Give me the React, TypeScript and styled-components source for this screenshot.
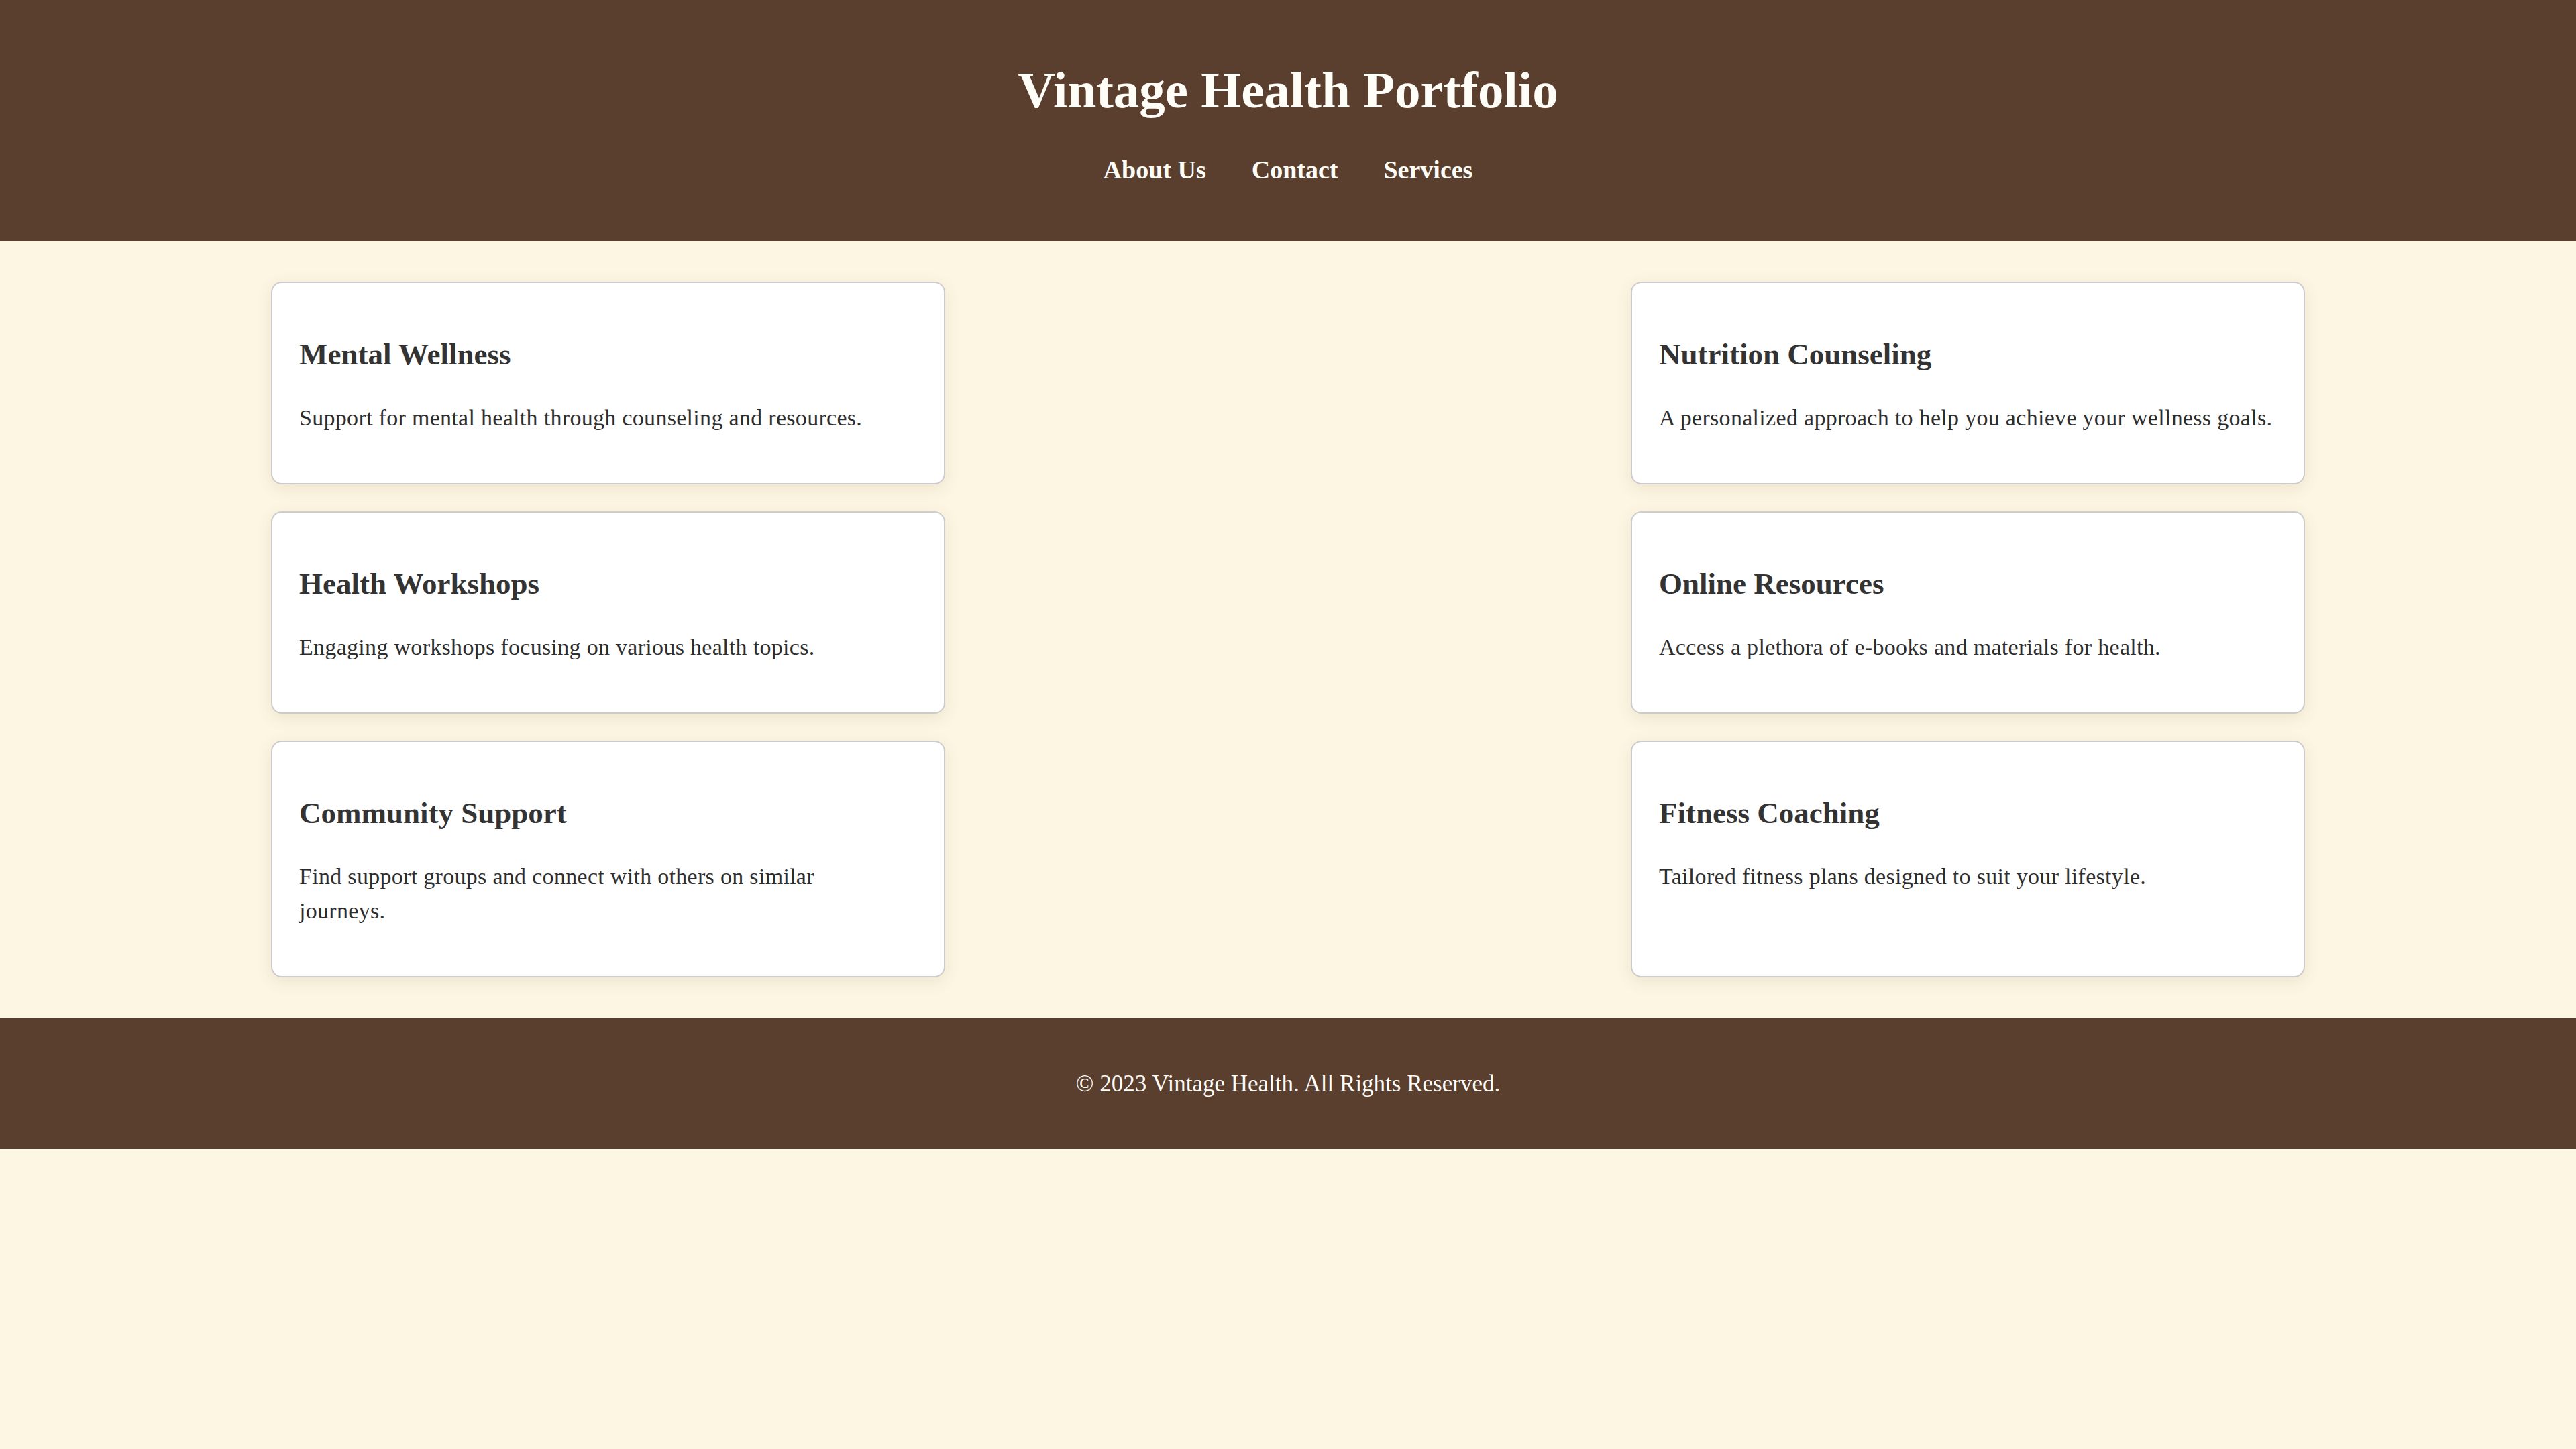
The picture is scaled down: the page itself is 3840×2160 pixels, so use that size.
import React from "react";
import styled, { createGlobalStyle } from "styled-components";

const GlobalStyle = createGlobalStyle`
  html, body {
    margin: 0;
    padding: 0;
    background: #fdf6e3;
  }
  body {
    font-family: "Liberation Serif", "Times New Roman", serif;
    color: #333;
  }
`;

const brown = "#5a3f2f";

const Header = styled.header`
  background: ${brown};
  padding: 40px 0;
  text-align: center;
`;

const Title = styled.h1`
  margin: 43px 0;
  font-size: 77px;
  line-height: 102.4px;
  font-weight: 700;
  color: #fffdf8;
`;

const Nav = styled.nav`
  display: flex;
  justify-content: center;
  gap: 68px;
  margin: 0 0 40px;
`;

const NavLink = styled.a`
  font-size: 38px;
  line-height: 51.2px;
  font-weight: 700;
  color: #fffdf8;
  text-decoration: none;
`;

const Main = styled.main`
  padding: 60px 0 61px;
`;

const CardGrid = styled.section`
  width: 3032px;
  margin: 0 auto;
  display: grid;
  grid-template-columns: repeat(2, 1005px);
  justify-content: space-between;
  row-gap: 40px;
`;

const Card = styled.article`
  background: #ffffff;
  border: 2px solid #cccccc;
  border-radius: 16px;
  padding: 40px;
  box-shadow: 0 6px 24px rgba(90, 70, 20, 0.1);
`;

const CardTitle = styled.h3`
  margin: 37.5px 0;
  font-size: 45px;
  line-height: 59.9px;
  font-weight: 700;
  color: #333;
`;

const CardText = styled.p`
  margin: 32px 0;
  font-size: 34px;
  letter-spacing: 0.3px;
  line-height: 51.2px;
  color: #2e2e2e;
  white-space: pre-line;
`;

const Footer = styled.footer`
  background: ${brown};
  padding: 40px;
  text-align: center;
`;

const FooterText = styled.p`
  margin: 32px 0;
  font-size: 35px;
  line-height: 51.2px;
  color: #fffdf8;
`;

const services = [
  {
    title: "Mental Wellness",
    text: "Support for mental health through counseling and resources.",
  },
  {
    title: "Nutrition Counseling",
    text: "A personalized approach to help you achieve your wellness goals.",
  },
  {
    title: "Health Workshops",
    text: "Engaging workshops focusing on various health topics.",
  },
  {
    title: "Online Resources",
    text: "Access a plethora of e-books and materials for health.",
  },
  {
    title: "Community Support",
    text: "Find support groups and connect with others on similar\njourneys.",
  },
  {
    title: "Fitness Coaching",
    text: "Tailored fitness plans designed to suit your lifestyle.",
  },
];

export default function App() {
  return (
    <>
      <GlobalStyle />
      <Header>
        <Title>Vintage Health Portfolio</Title>
        <Nav>
          <NavLink href="#about">About Us</NavLink>
          <NavLink href="#contact">Contact</NavLink>
          <NavLink href="#services">Services</NavLink>
        </Nav>
      </Header>
      <Main>
        <CardGrid>
          {services.map((s) => (
            <Card key={s.title}>
              <CardTitle>{s.title}</CardTitle>
              <CardText>{s.text}</CardText>
            </Card>
          ))}
        </CardGrid>
      </Main>
      <Footer>
        <FooterText>© 2023 Vintage Health. All Rights Reserved.</FooterText>
      </Footer>
    </>
  );
}
